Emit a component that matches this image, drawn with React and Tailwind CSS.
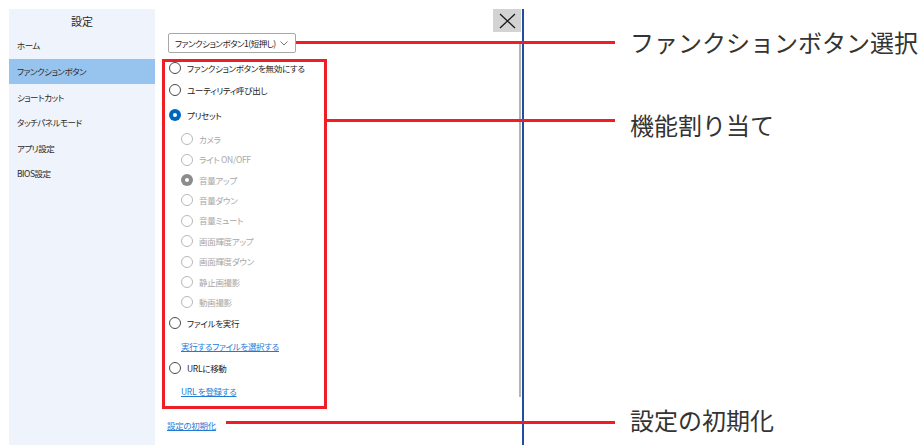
const font = "font-['Noto_Sans_CJK_JP','Noto_Sans',sans-serif]";

const navItems = ['ホーム', 'ファンクションボタン', 'ショートカット', 'タッチパネルモード', 'アプリ設定', 'BIOS設定'];

const presets = [
  { label: 'カメラ' },
  { label: 'ライト ON/OFF' },
  { label: '音量アップ', checked: true },
  { label: '音量ダウン' },
  { label: '音量ミュート' },
  { label: '画面輝度アップ' },
  { label: '画面輝度ダウン' },
  { label: '静止画撮影' },
  { label: '動画撮影' },
];

const Radio = ({ checked, disabled }) => {
  if (checked) {
    return (
      <span
        className={`flex items-center justify-center w-[12px] h-[12px] rounded-full shrink-0 ${
          disabled ? 'bg-[#8c8c8c]' : 'bg-[#0067c0]'
        }`}
      >
        <span className="w-[4px] h-[4px] rounded-full bg-white" />
      </span>
    );
  }
  return (
    <span
      className={`w-[12px] h-[12px] rounded-full border shrink-0 bg-white ${
        disabled ? 'border-[#b8b8b8]' : 'border-[#4a4a4a]'
      }`}
    />
  );
};

const RadioRow = ({ label, checked, disabled, className }) => (
  <div className={`flex items-center gap-[6px] ${className}`}>
    <Radio checked={checked} disabled={disabled} />
    <span className={disabled ? 'text-[#a8a8a8]' : 'text-[#222]'}>{label}</span>
  </div>
);

const App = () => {
  return (
    <div className={`relative w-[924px] h-[445px] bg-white overflow-hidden ${font} [font-feature-settings:'palt']`}>
      <div className="flex h-full pt-[9px] pl-[9px]">
        {/* sidebar */}
        <aside className="w-[146px] h-full bg-[#eef3fc] text-[#2a2a2a]">
          <div className="h-[24px] flex items-center justify-center text-[11px]">設定</div>
          {navItems.map((item, i) => (
            <div
              key={item}
              className={`h-[25.6px] flex items-center pl-[8px] text-[8.5px] tracking-[-0.5px] ${
                i === 1 ? 'bg-[#97c4ee]' : ''
              }`}
            >
              {item}
            </div>
          ))}
        </aside>

        {/* content */}
        <main className="w-[364px] pl-[13px] pt-[24px] text-[8.5px] tracking-[-0.3px] whitespace-nowrap">
          <div className="w-[128px] h-[20px] border border-[#a8a8a8] rounded-[2px] flex items-center justify-between pl-[6px] pr-[7px] text-[#222]">
            <span className="tracking-[-0.5px]">ファンクションボタン1(短押し)</span>
            <svg width="8" height="5" viewBox="0 0 8 5">
              <polyline points="0.5,0.5 4,4 7.5,0.5" fill="none" stroke="#666" strokeWidth="0.9" />
            </svg>
          </div>
          <div className="mt-[4px] pl-[1px]">
            <RadioRow label="ファンクションボタンを無効にする" className="h-[22px]" />
            <RadioRow label="ユーティリティ呼び出し" className="h-[22px]" />
            <RadioRow label="プリセット" checked className="h-[28px]" />
            <div className="pl-[12px]">
              {presets.map((p) => (
                <RadioRow key={p.label} label={p.label} checked={p.checked} disabled className="h-[20.4px]" />
              ))}
            </div>
            <RadioRow label="ファイルを実行" className="h-[21px]" />
            <div className="h-[26px] flex items-center pl-[12px]">
              <span className="text-[#1f7bd6] underline">実行するファイルを選択する</span>
            </div>
            <RadioRow label="URLに移動" className="h-[17px]" />
            <div className="h-[29px] flex items-center pl-[12px]">
              <span className="text-[#1f7bd6] underline">URL を登録する</span>
            </div>
          </div>
          <div className="h-[39px] flex items-center -ml-[1px]">
            <span className="text-[#1f7bd6] underline">設定の初期化</span>
          </div>
        </main>

        {/* scrollbar + window edge */}
        <div className="w-[2px] pt-[35px] pb-[48px]">
          <div className="w-[2px] h-full bg-[#b4b4b4]" />
        </div>
        <div className="w-[1px]" />
        <div className="w-[2px] h-full bg-[#1f4ea3]" />

        {/* annotation labels */}
        <div className="flex flex-col ml-[106px] text-[24px] text-[#333] [font-feature-settings:normal] whitespace-nowrap">
          <div className="mt-[17px] h-[32px] leading-[32px]">ファンクションボタン選択</div>
          <div className="mt-[51px] h-[32px] leading-[32px]">機能割り当て</div>
          <div className="mt-[263px] h-[32px] leading-[32px]">設定の初期化</div>
        </div>
      </div>

      {/* close button over the window */}
      <div className="absolute left-[493px] top-[9px] w-[28px] h-[23px] bg-[#d3d3d3] flex items-center justify-center">
        <svg width="17" height="16" viewBox="0 0 17 16">
          <path d="M1 1 L16 15 M16 1 L1 15" stroke="#1a1a1a" strokeWidth="1.3" fill="none" />
        </svg>
      </div>

      {/* annotation marks */}
      <div className="absolute left-[162px] top-[59px] w-[165px] h-[350px] border-[3px] border-[#ee1d26]" />
      <div className="absolute left-[296px] top-[41px] w-[319px] h-[3px] bg-[#ee1d26]" />
      <div className="absolute left-[326px] top-[119px] w-[289px] h-[3px] bg-[#ee1d26]" />
      <div className="absolute left-[226px] top-[421px] w-[389px] h-[3px] bg-[#ee1d26]" />
    </div>
  );
};

export default App;
